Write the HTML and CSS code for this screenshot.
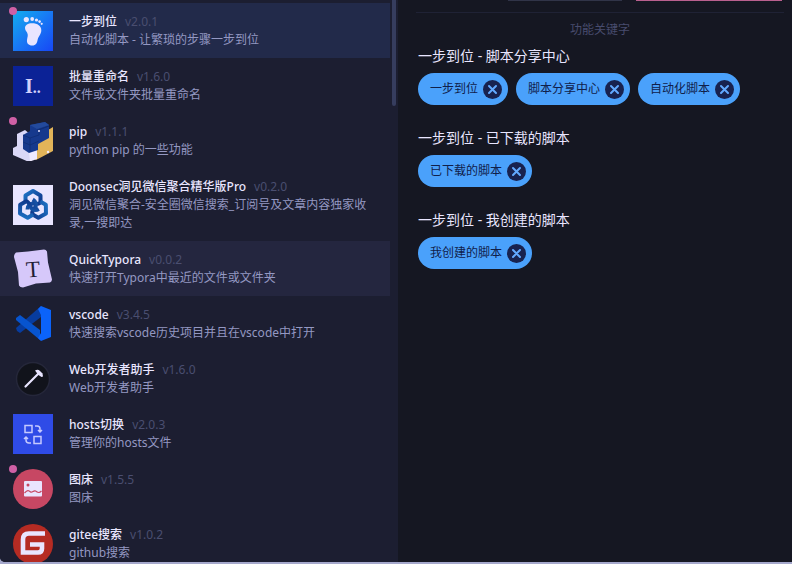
FILE: index.html
```html
<!DOCTYPE html>
<html lang="zh-CN">
<head>
<meta charset="utf-8">
<title>插件</title>
<link rel="stylesheet" href="styles.css">
</head>
<body>
<main class="app">
  <aside class="sidebar">
    <ul class="plugins">
      <li class="plugin selected">
        <span class="icon badge">
          <svg viewBox="0 0 40 40" aria-hidden="true">
            <defs><linearGradient id="foot" x1="0" y1="0" x2="1" y2="1"><stop offset="0" stop-color="#13aeee"/><stop offset=".5" stop-color="#1878f4"/><stop offset="1" stop-color="#1747f5"/></linearGradient></defs>
            <rect width="40" height="40" fill="url(#foot)"/>
            <g fill="#e9e5ff"><circle cx="13.300" cy="8.600" r="2.600"/><circle cx="19.200" cy="8" r="1.900"/><circle cx="23.500" cy="9" r="1.600"/><circle cx="26.600" cy="10.600" r="1.300"/><circle cx="28.700" cy="12.800" r="1.100"/>
            <path d="M12 17c0-3 3-4.700 7-4.700 5.500 0 9.500 2.700 9.300 7.200-.2 4-2.800 5.500-3.600 9-.7 3.500-1.600 6-5.500 6-3.700 0-5.600-2.300-5.200-5.500.3-3 1.500-4.500.2-7.300-1.100-1.900-2.200-2.700-2.200-4.700z"/></g>
          </svg>
        </span>
        <div class="info"><h3 class="name">一步到位<span class="version">v2.0.1</span></h3><p class="desc">自动化脚本 - 让繁琐的步骤一步到位</p></div>
      </li>
      <li class="plugin">
        <span class="icon">
          <svg viewBox="0 0 40 40" aria-hidden="true"><rect width="40" height="40" fill="#0b2296"/><text class="mark-rename" x="12" y="27">I<tspan class="mark-dots">..</tspan></text></svg>
        </span>
        <div class="info"><h3 class="name">批量重命名<span class="version">v1.6.0</span></h3><p class="desc">文件或文件夹批量重命名</p></div>
      </li>
      <li class="plugin">
        <span class="icon badge">
          <svg viewBox="0 0 40 40" aria-hidden="true">
            <path d="M0 27l4-2V13l8-4 6 5v26l-2 1L0 34z" fill="#dad8f7"/>
            <path d="M22 17l18-11v24l-17 9-6-3z" fill="#e2b459"/>
            <path d="M16 31l8-3v10l-7 2.500z" fill="#f0ebff"/>
            <path d="M17 4l15-3 4 3v13l-11 6v6l-9 3-6-4V14l7-4z" fill="#16398d"/>
            <path d="M10 14l7 3 9-3V9l10-4M17 17v14M10 21l7 3 9-4M24 9l12-4" fill="none" stroke="#0f2d74" stroke-width=".8"/>
            <path d="M17 4l15-3 4 3-12 4z" fill="#234a9c"/><circle cx="26" cy="10" r="1" fill="#e9e5ff"/><circle cx="35" cy="31" r="1.200" fill="#f0ebff"/>
          </svg>
        </span>
        <div class="info"><h3 class="name">pip<span class="version">v1.1.1</span></h3><p class="desc">python pip 的一些功能</p></div>
      </li>
      <li class="plugin">
        <span class="icon">
          <svg viewBox="0 0 40 40" aria-hidden="true">
            <defs>
              <linearGradient id="loop" x1="0" y1="0" x2="1" y2="1"><stop offset="0" stop-color="#1d74c6"/><stop offset="1" stop-color="#0c2c80"/></linearGradient>
              <path id="lobe" d="M12.500 17V10.500L20 6l7.500 4.500V16c0 3-3 3-6 2.500-4-.5-7 2-7 6" fill="none" stroke="url(#loop)" stroke-width="4" stroke-linejoin="round"/>
            </defs>
            <use href="#lobe"/>
            <use href="#lobe" transform="rotate(120 20 21)"/>
            <use href="#lobe" transform="rotate(240 20 21)"/>
          </svg>
        </span>
        <div class="info"><h3 class="name">Doonsec洞见微信聚合精华版Pro<span class="version">v0.2.0</span></h3><p class="desc">洞见微信聚合-安全圈微信搜索_订阅号及文章内容独家收录,一搜即达</p></div>
      </li>
      <li class="plugin hovered">
        <span class="icon">
          <svg viewBox="0 0 40 40" aria-hidden="true">
            <path d="M3 3.500l12-1L31 .5q2 0 3 2l1 11 4 17q0 2-2 3l-14 1-13 4q-3 0-4-2L5 23 1 8q0-3 2-4.500z" fill="#d6c8fa"/>
            <text class="mark-typora" x="20" y="28" text-anchor="middle" transform="rotate(-4 20 20)">T</text>
          </svg>
        </span>
        <div class="info"><h3 class="name">QuickTypora<span class="version">v0.0.2</span></h3><p class="desc">快速打开Typora中最近的文件或文件夹</p></div>
      </li>
      <li class="plugin">
        <span class="icon">
          <svg viewBox="0 0 40 40" aria-hidden="true">
            <path d="M28 2L3 24l1 3 3 2 21-16z" fill="#073c9f"/>
            <path d="M7 11l-4 3v2l24 20V26z" fill="#0754cf"/>
            <path d="M28 2l10 4v27l-10 4-3-3 3-5V11l-3-6z" fill="#0b63fa"/>
          </svg>
        </span>
        <div class="info"><h3 class="name">vscode<span class="version">v3.4.5</span></h3><p class="desc">快速搜索vscode历史项目并且在vscode中打开</p></div>
      </li>
      <li class="plugin">
        <span class="icon">
          <svg viewBox="0 0 40 40" aria-hidden="true">
            <circle cx="20" cy="20" r="16.500" fill="#11131b" stroke="#25273a" stroke-width="1.500"/>
            <path d="M12.500 27.500L26 14" stroke="#e9e5ff" stroke-width="2.200" stroke-linecap="round"/>
            <path d="M22 11.500q3-1.500 5 .5l2.500 2.500.5 3-1.500.5-3-2-2-2.500z" fill="#e9e5ff"/>
          </svg>
        </span>
        <div class="info"><h3 class="name">Web开发者助手<span class="version">v1.6.0</span></h3><p class="desc">Web开发者助手</p></div>
      </li>
      <li class="plugin">
        <span class="icon">
          <svg viewBox="0 0 40 40" aria-hidden="true">
            <rect width="40" height="40" fill="#2f4be7"/>
            <g fill="none" stroke="#c5c9ff" stroke-width="1.500"><path d="M12 11.500h7v7h-7zM21 22.500h7v7h-7z"/><path d="M22 12h2q3 0 3 3v3m-2-2l2 2 2-2M18 29h-2q-3 0-3-3v-3m-2 2l2-2 2 2"/></g>
          </svg>
        </span>
        <div class="info"><h3 class="name">hosts切换<span class="version">v2.0.3</span></h3><p class="desc">管理你的hosts文件</p></div>
      </li>
      <li class="plugin">
        <span class="icon badge">
          <svg viewBox="0 0 40 40" aria-hidden="true">
            <circle cx="20" cy="20" r="20" fill="#c74763"/><rect x="11" y="12" width="18" height="15.500" rx="1" fill="#e9e5ff"/>
            <circle cx="15" cy="16" r="1.500" fill="#c74763"/><path d="M11.500 24c3-3 4-3 6-1 2 1 3-2 5-1s3 3 6 0" fill="none" stroke="#c74763" stroke-width="1.200"/>
          </svg>
        </span>
        <div class="info"><h3 class="name">图床<span class="version">v1.5.5</span></h3><p class="desc">图床</p></div>
      </li>
      <li class="plugin">
        <span class="icon">
          <svg viewBox="0 0 40 40" aria-hidden="true">
            <circle cx="20" cy="20" r="20" fill="#b52b23"/>
            <path d="M32 9.500H16q-6 0-6 6v13h15q4 0 4-4v-4H17" fill="none" stroke="#e9e5ff" stroke-width="4.600"/>
          </svg>
        </span>
        <div class="info"><h3 class="name">gitee搜索<span class="version">v1.0.2</span></h3><p class="desc">github搜索</p></div>
      </li>
    </ul>
    <div class="scrollbar"></div>
  </aside>

  <section class="detail">
    <div class="actions"><span class="action"></span><span class="action danger"></span></div>
    <h2 class="divider-title">功能关键字</h2>
    <section class="feature">
      <h3 class="feature-title">一步到位 - 脚本分享中心</h3>
      <div class="chips">
        <span class="chip">一步到位<button class="close" type="button" aria-label="移除"><svg viewBox="0 0 19 19"><path d="M6 6l7 7M13 6l-7 7"/></svg></button></span>
        <span class="chip">脚本分享中心<button class="close" type="button" aria-label="移除"><svg viewBox="0 0 19 19"><path d="M6 6l7 7M13 6l-7 7"/></svg></button></span>
        <span class="chip">自动化脚本<button class="close" type="button" aria-label="移除"><svg viewBox="0 0 19 19"><path d="M6 6l7 7M13 6l-7 7"/></svg></button></span>
      </div>
    </section>
    <section class="feature">
      <h3 class="feature-title">一步到位 - 已下载的脚本</h3>
      <div class="chips">
        <span class="chip">已下载的脚本<button class="close" type="button" aria-label="移除"><svg viewBox="0 0 19 19"><path d="M6 6l7 7M13 6l-7 7"/></svg></button></span>
      </div>
    </section>
    <section class="feature">
      <h3 class="feature-title">一步到位 - 我创建的脚本</h3>
      <div class="chips">
        <span class="chip">我创建的脚本<button class="close" type="button" aria-label="移除"><svg viewBox="0 0 19 19"><path d="M6 6l7 7M13 6l-7 7"/></svg></button></span>
      </div>
    </section>
  </section>
</main>
</body>
</html>
```
FILE: styles.css
```css
* { box-sizing: border-box; }

body {
  margin: 0;
  padding-bottom: 2px;
  height: 100vh;
  overflow: hidden;
  background: #a5a8cc;
  color: #e9e6ff;
  font: 12px/18px "Noto Sans", "Noto Sans CJK SC", sans-serif;
}

h2, h3, p, ul { margin: 0; padding: 0; }

.app {
  display: grid;
  grid-template-columns: minmax(0, 199fr) minmax(0, 197fr);
  height: 100%;
  overflow: hidden;
  border-bottom-left-radius: 5px;
  background: #151722;
}

.sidebar {
  display: flex;
  gap: 2px;
  padding-right: 2px;
  overflow: hidden;
  background: #1c1e31;
}

.plugins {
  flex: 1;
  min-width: 0;
  padding-top: 3px;
  list-style: none;
}

.plugin {
  display: flex;
  align-items: center;
  gap: 16px;
  min-height: 55px;
  padding: 0 13px;
}

.selected { background: #222a4a; }
.hovered { background: #24263f; }

.icon {
  position: relative;
  flex: none;
  width: 40px;
  height: 40px;
}

.icon svg { display: block; width: 100%; height: 100%; }

.icon svg:has(#lobe) { background: #e8e5ff; }

.badge::before {
  content: "";
  position: absolute;
  z-index: 1;
  top: -4px;
  left: -4px;
  width: 8px;
  height: 8px;
  border-radius: 50%;
  background: #cf60a5;
}

.mark-rename { fill: #d3d1fb; font: bold 20px "Liberation Serif", serif; }
.mark-dots { font-size: 16px; }
.mark-typora { fill: #1f2035; font: 23px "Liberation Serif", serif; }

.info { flex: 1; min-width: 0; padding: 10px 0 9px; }
.name { font-size: 12px; font-weight: 500; }
.version { margin-left: 8px; color: #4a4e70; font-weight: 400; }
.desc { color: #9498c2; }

.scrollbar {
  width: 4px;
  height: 106px;
  border-radius: 0 0 2px 2px;
  background: #363d5e;
}

.detail { padding: 0 8px 0 18px; overflow: hidden; }

.actions {
  display: flex;
  justify-content: flex-end;
  gap: 14px;
  padding: 0 2px 11px 0;
}

.action { flex: 0 1 31%; height: 1px; background: #303448; }
.danger { flex-basis: 40%; background: #b9608f; }

.divider-title {
  padding: 8px 0 7px;
  border-top: 1px solid #1f2235;
  color: #484c6e;
  font-size: 12px;
  font-weight: 400;
  text-align: center;
}

.feature { margin-bottom: 23px; padding-left: 2px; }
.feature-title { margin-bottom: 7px; font-size: 14px; font-weight: 400; line-height: 20px; }
.chips { display: flex; flex-wrap: wrap; gap: 8px; }

.chip {
  display: flex;
  align-items: center;
  gap: 5px;
  height: 32px;
  padding: 0 6px 0 12px;
  border-radius: 16px;
  background: #4aa1fb;
  color: #10204a;
}

.close {
  width: 19px;
  height: 19px;
  padding: 0;
  border: 0;
  border-radius: 50%;
  background: #18224f;
}

.close svg { display: block; fill: none; stroke: #62a9ff; stroke-width: 2; stroke-linecap: round; }
```
